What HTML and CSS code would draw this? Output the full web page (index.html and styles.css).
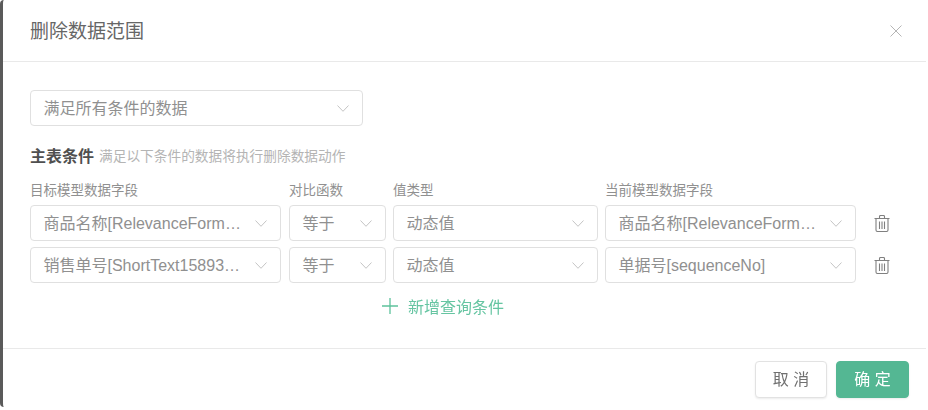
FILE: index.html
```html
<!DOCTYPE html>
<html lang="zh-CN">
<head>
<meta charset="utf-8">
<title>删除数据范围</title>
<link rel="stylesheet" href="styles.css">
</head>
<body>
<div class="modal">
  <header class="modal-header">
    <h1 class="modal-title">删除数据范围</h1>
    <svg class="close" viewBox="0 0 12 12" width="12" height="12"><path d="M.5.5l11 11M11.500.5l-11 11"/></svg>
  </header>
  <main class="modal-body">
    <div class="select select-scope"><span class="value">满足所有条件的数据</span><svg class="chev" viewBox="0 0 12 7" width="12" height="7"><path d="M.5.500L6 6.300 11.500.5"/></svg></div>
    <div class="section"><strong>主表条件</strong><span class="hint">满足以下条件的数据将执行删除数据动作</span></div>
    <div class="row labels">
      <span class="c1">目标模型数据字段</span><span class="c2">对比函数</span><span class="c3">值类型</span><span class="c4">当前模型数据字段</span>
    </div>
    <div class="row cond">
      <div class="select c1"><span class="value">商品名称[RelevanceForm…</span><svg class="chev" viewBox="0 0 12 7" width="12" height="7"><path d="M.5.500L6 6.300 11.500.5"/></svg></div>
      <div class="select c2"><span class="value">等于</span><svg class="chev" viewBox="0 0 12 7" width="12" height="7"><path d="M.5.500L6 6.300 11.500.5"/></svg></div>
      <div class="select c3"><span class="value">动态值</span><svg class="chev" viewBox="0 0 12 7" width="12" height="7"><path d="M.5.500L6 6.300 11.500.5"/></svg></div>
      <div class="select c4"><span class="value">商品名称[RelevanceForm…</span><svg class="chev" viewBox="0 0 12 7" width="12" height="7"><path d="M.5.500L6 6.300 11.500.5"/></svg></div>
      <svg class="trash" viewBox="0 0 16 17" width="16" height="17"><path d="M.5 3.500h15M5.500 3.300V1.500q0-1 1-1h3q1 0 1 1v1.800M2 3.500v11.500q0 1.500 1.500 1.500h9q1.500 0 1.500-1.500V3.500M5.500 6.500v7.500M8 6.500v7.500M10.500 6.500v7.500"/></svg>
    </div>
    <div class="row cond">
      <div class="select c1"><span class="value">销售单号[ShortText15893…</span><svg class="chev" viewBox="0 0 12 7" width="12" height="7"><path d="M.5.500L6 6.300 11.500.5"/></svg></div>
      <div class="select c2"><span class="value">等于</span><svg class="chev" viewBox="0 0 12 7" width="12" height="7"><path d="M.5.500L6 6.300 11.500.5"/></svg></div>
      <div class="select c3"><span class="value">动态值</span><svg class="chev" viewBox="0 0 12 7" width="12" height="7"><path d="M.5.500L6 6.300 11.500.5"/></svg></div>
      <div class="select c4"><span class="value">单据号[sequenceNo]</span><svg class="chev" viewBox="0 0 12 7" width="12" height="7"><path d="M.5.500L6 6.300 11.500.5"/></svg></div>
      <svg class="trash" viewBox="0 0 16 17" width="16" height="17"><path d="M.5 3.500h15M5.500 3.300V1.500q0-1 1-1h3q1 0 1 1v1.800M2 3.500v11.500q0 1.500 1.500 1.500h9q1.500 0 1.500-1.500V3.500M5.500 6.500v7.500M8 6.500v7.500M10.500 6.500v7.500"/></svg>
    </div>
    <div class="add"><svg viewBox="0 0 16 16" width="16" height="16"><path d="M8 0v16M0 8h16"/></svg><span>新增查询条件</span></div>
  </main>
  <footer class="modal-footer">
    <button class="btn">取 消</button>
    <button class="btn primary">确 定</button>
  </footer>
</div>
</body>
</html>
```
FILE: styles.css
```css
html, body { margin: 0; }
body {
  background: #fff;
  font-family: "Liberation Sans", "Noto Sans CJK SC", sans-serif;
  overflow: hidden;
  width: 928px;
  height: 410px;
}
.modal {
  box-sizing: border-box;
  width: 926px;
  height: 407px;
  background: #fff;
  border-left: 3px solid #5a5a5a;
  border-radius: 4px;
  display: flex;
  flex-direction: column;
  filter: blur(.35px);
}
.modal-header {
  height: 62px;
  box-sizing: border-box;
  flex: none;
  border-bottom: 1px solid #e9e9e9;
  display: flex;
  align-items: center;
  justify-content: space-between;
  padding: 0 24px 2px 27px;
}
.modal-title {
  margin: 0;
  font-size: 19px;
  font-weight: 400;
  color: #666;
}
.close { margin-top: 3px; }
.close path { fill: none; stroke: #b5b5b5; stroke-width: 1; }
.modal-body {
  flex: 1;
  padding: 28px 0 0 27px;
}
.select {
  box-sizing: border-box;
  height: 36px;
  border: 1px solid #e0e0e0;
  border-radius: 4px;
  background: #fff;
  display: flex;
  align-items: center;
  justify-content: space-between;
  padding: 0 13px 0 12.500px;
  color: #909090;
  font-size: 16px;
}
.value { white-space: nowrap; min-width: 0; margin-bottom: 2px; }
.chev { flex: none; }
.chev path { fill: none; stroke: #c4c4c4; stroke-width: 1; }
.select-scope { width: 333px; }
.section { margin-top: 19px; height: 20px; display: flex; align-items: center; }
.section strong { font-size: 16px; font-weight: 700; color: #505050; }
.hint { font-size: 13.700px; color: #b4b4b4; margin-left: 5px; }
.row { display: flex; gap: 7px; }
.labels { margin-top: 14px; height: 20px; align-items: center; font-size: 13.500px; color: #909090; }
.c1 { width: 251px; flex: none; margin-right: 1px; }
.c2 { width: 97px; flex: none; }
.c3 { width: 205px; flex: none; }
.c4 { width: 251px; flex: none; }
.cond { margin-top: 6px; align-items: center; }
.trash { margin-left: 11px; flex: none; }
.trash path { fill: none; stroke: #808080; stroke-width: 1.100; }
.add {
  margin-top: 11px;
  margin-left: 352px;
  height: 24px;
  display: flex;
  align-items: center;
  gap: 10px;
  color: #66c5a2;
  font-size: 16px;
}
.add path { fill: none; stroke: #5dc29c; stroke-width: 1.300; }
.modal-footer {
  height: 59px;
  box-sizing: border-box;
  flex: none;
  border-top: 1px solid #e9e9e9;
  display: flex;
  align-items: center;
  justify-content: flex-end;
  gap: 9px;
  padding: 2px 17px 0 0;
}
.btn {
  width: 72px;
  height: 37px;
  border: 1px solid #e2e2e2;
  border-radius: 4px;
  background: #fff;
  color: #707070;
  font: 16px "Liberation Sans", "Noto Sans CJK SC", sans-serif;
  box-shadow: 0 1px 2px rgba(0,0,0,.08);
  padding: 0 0 2px;
}
.primary { background: #54b793; border-color: #54b793; color: #fff; width: 73px; }
```
